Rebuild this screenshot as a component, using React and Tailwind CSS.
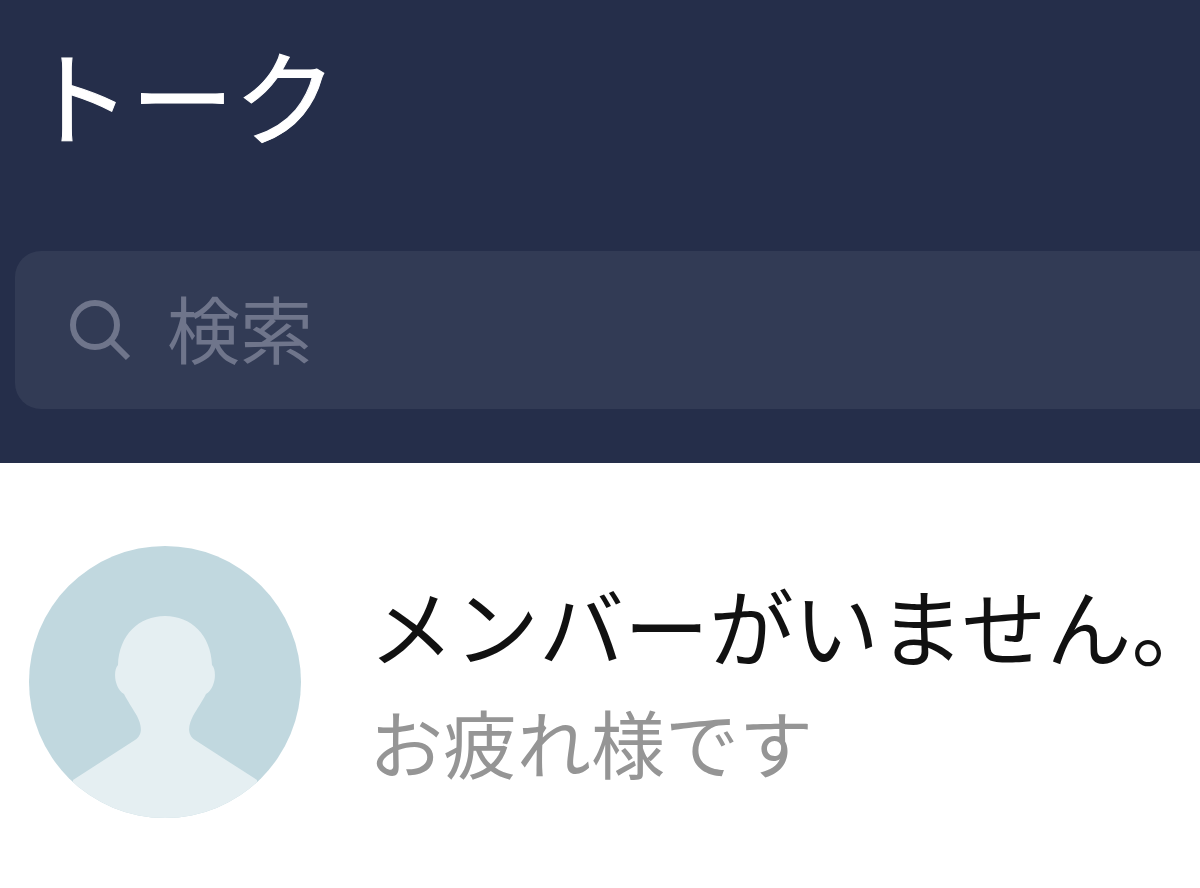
const chats = [{ id: 1, name: "メンバーがいません。", message: "お疲れ様です" }];

function SearchIcon() {
  return (
    <svg viewBox="0 0 62 62" className="size-[62px] shrink-0" fill="none" stroke="#6f758b" strokeWidth="6" aria-hidden="true">
      <circle cx="26" cy="26" r="22" />
      <path d="M41.5 41.5 59 59" />
    </svg>
  );
}

function Avatar() {
  return (
    <svg viewBox="0 0 272 272" className="size-[272px] shrink-0 rounded-full bg-[#c1d8df]" aria-hidden="true">
      <path
        fill="#e5eff2"
        d="M136 70C110 70 90 89 89 119C84 124 85 142 95 148C98 154 104 163 108 170C112 178 115 188 106 194L44 234V272H228V234L166 194C157 188 160 178 164 170C168 163 174 154 177 148C187 142 188 124 183 119C182 89 162 70 136 70Z"
      />
    </svg>
  );
}

export default function App() {
  return (
    <div className="relative min-h-screen overflow-hidden bg-white font-['Noto_Sans_CJK_JP',sans-serif]">
      <header className="bg-[#252e4a] pt-11 pb-[54px]">
        <h1 className="pl-7 text-[103px] leading-[100px] text-white [-webkit-text-stroke:1px]">トーク</h1>
        <label className="mt-[107px] ml-[15px] flex h-[158px] items-center gap-9 rounded-l-[26px] bg-[#323b55] pl-[54px]">
          <SearchIcon />
          <input
            type="search"
            aria-label="検索"
            placeholder="検索"
            className="h-[110px] min-w-0 flex-1 bg-transparent pb-2 text-[73px] text-white outline-none placeholder:text-[#6f758b]"
          />
        </label>
      </header>

      <main>
        <ul>
          {chats.map((chat) => (
            <li key={chat.id} className="flex items-center gap-[68px] py-[83px] pl-[29px]">
              <Avatar />
              <div className="min-w-0 flex-1 whitespace-nowrap">
                <h2 className="text-[85px] leading-[118px] text-[#111111]">{chat.name}</h2>
                <p className="text-[74px] leading-[116px] text-[#959595]">{chat.message}</p>
              </div>
            </li>
          ))}
        </ul>
      </main>

      <span className="absolute right-[133px] bottom-0 h-px w-1.5 bg-[#777777]" />
    </div>
  );
}
